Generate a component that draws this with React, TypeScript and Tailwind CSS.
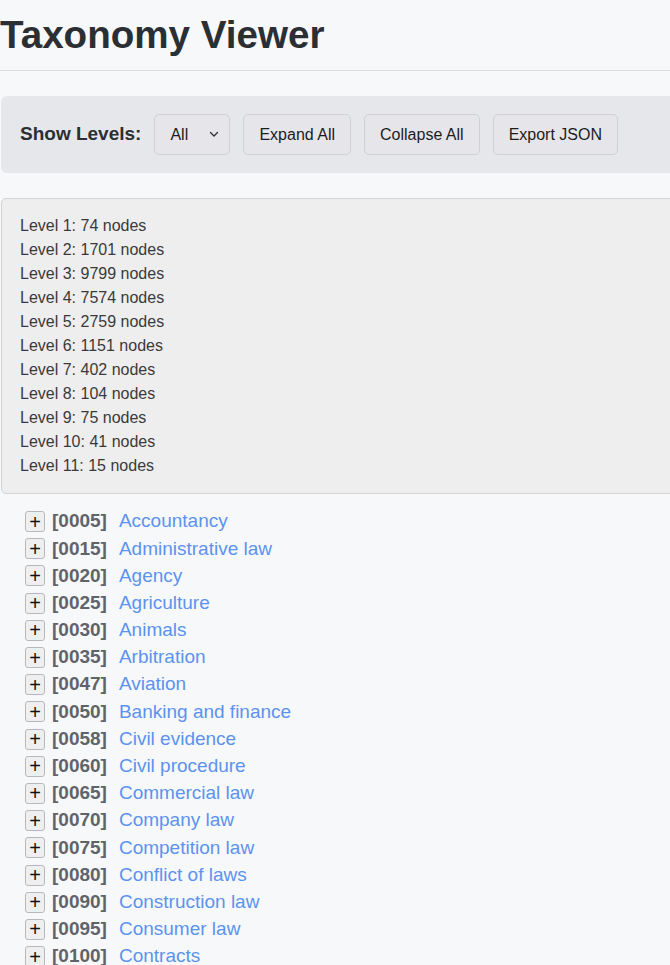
import React from "react";

const LEVELS = [74, 1701, 9799, 7574, 2759, 1151, 402, 104, 75, 41, 15];

const NODES: [string, string][] = [
  ["0005", "Accountancy"],
  ["0015", "Administrative law"],
  ["0020", "Agency"],
  ["0025", "Agriculture"],
  ["0030", "Animals"],
  ["0035", "Arbitration"],
  ["0047", "Aviation"],
  ["0050", "Banking and finance"],
  ["0058", "Civil evidence"],
  ["0060", "Civil procedure"],
  ["0065", "Commercial law"],
  ["0070", "Company law"],
  ["0075", "Competition law"],
  ["0080", "Conflict of laws"],
  ["0090", "Construction law"],
  ["0095", "Consumer law"],
  ["0100", "Contracts"],
];

const btn =
  "h-[41px] rounded-[5px] border border-[#cfd1d4] bg-[#e6e6ea] px-[15px] text-[16px] text-[#1c1c1e]";

const App = () => {
  return (
    <div className="min-h-screen overflow-x-hidden bg-[#f7f8fa] font-['Liberation_Sans',Arial,sans-serif]">
      <div className="w-[860px]">
        {/* Header */}
        <h1 className="h-[71px] border-b border-[#dcdee1] pt-[12px] text-[38.6px] leading-[46px] font-bold text-[#2b2f33]">
          Taxonomy Viewer
        </h1>

        {/* Toolbar */}
        <div className="mt-[25px] ml-px flex items-center gap-[13px] rounded-[6px] bg-[#e5e7ea] px-[19px] py-[18px]">
          <span className="text-[19px] font-bold text-[#2b2f33]">Show Levels:</span>
          <div className="flex h-[41px] w-[76px] items-center justify-between rounded-[5px] border border-[#cfd1d4] bg-[#e6e6ea] pr-[10px] pl-[15px] text-[16px] text-[#1c1c1e]">
            <span>All</span>
            <svg width="10" height="7" viewBox="0 0 10 7" fill="none">
              <path d="M1.5 1.5 5 5l3.5-3.5" stroke="#333" strokeWidth="1.4" strokeLinecap="round" strokeLinejoin="round" />
            </svg>
          </div>
          <button type="button" className={btn}>Expand All</button>
          <button type="button" className={btn}>Collapse All</button>
          <button type="button" className={btn}>Export JSON</button>
        </div>

        {/* Level stats */}
        <div className="mt-[25px] ml-px rounded-[5px] border border-[#d3d3d3] bg-[#eeeeee] px-[18px] pt-[15px] pb-[15px] text-[16px] leading-[24px] text-[#3a3a3a]">
          {LEVELS.map((n, i) => (
            <div key={i}>
              Level {i + 1}: {n} nodes
            </div>
          ))}
        </div>

        {/* Tree */}
        <ul className="pt-[14px] pl-[25px]">
          {NODES.map(([code, name]) => (
            <li key={code} className="flex h-[27.2px] items-center text-[19px]">
              <button
                type="button"
                className="flex h-[21px] w-[20px] items-center justify-center rounded-[3px] border border-[#b8b8b8] bg-[#efefef] text-[20px] leading-none text-[#111]"
              >
                +
              </button>
              <span className="ml-[7px] font-bold text-[#5f6469]">[{code}]</span>
              <span className="ml-[12px] text-[#5b93ef]">{name}</span>
            </li>
          ))}
        </ul>
      </div>
    </div>
  );
};

export default App;
